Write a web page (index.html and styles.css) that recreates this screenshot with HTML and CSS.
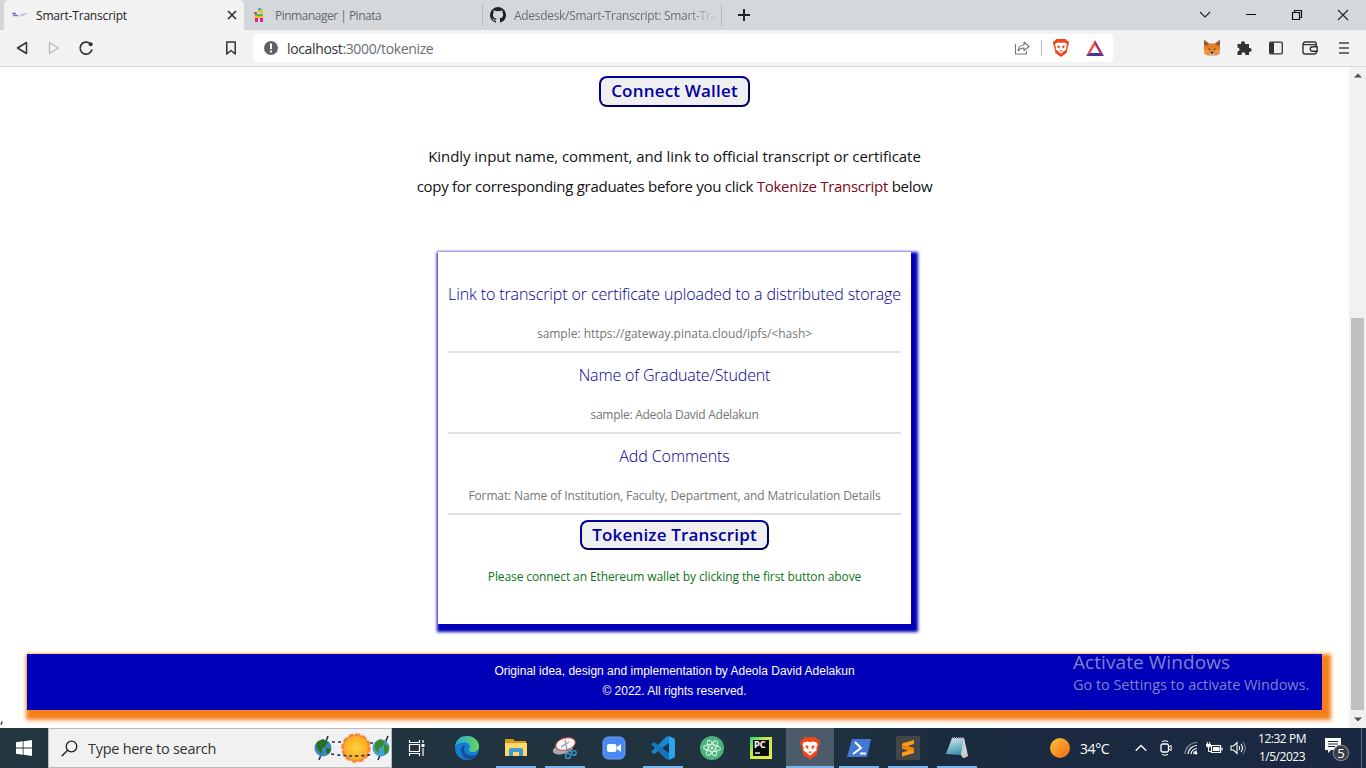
FILE: index.html
```html
<!DOCTYPE html>
<html lang="en">
<head>
<meta charset="utf-8">
<title>Smart-Transcript</title>
<link rel="stylesheet" href="styles.css">
</head>
<body>
<div class="desktop">
  <header class="tabs">
    <div class="tab active">
      <svg class="fav" width="16" height="16" viewBox="0 0 16 16"><path d="M0 6.500h4M1 8.500h5" stroke="#7777bd" stroke-width="1.600"/><path d="M7 9l4-.5 4-2.500M9 7l3 .5" stroke="#b6b6df" stroke-width="1.200" fill="none"/></svg>
      <span class="t t1">Smart-Transcript</span>
      <svg class="x" width="10" height="10" viewBox="0 0 10 10"><path d="M1 1l8 8M9 1L1 9" stroke="#333" stroke-width="1.700"/></svg>
    </div>
    <div class="tab second">
      <svg class="fav" width="14" height="16" viewBox="0 0 14 16"><path d="M6 1h3l1 3H6z" fill="#3cb7c3"/><path d="M2 5h3v2H2z" fill="#d94a66"/><path d="M7 3h4v3H7z" fill="#f2c313"/><path d="M3 7h8v2H3z" fill="#54b947"/><path d="M3 9h8v2H3z" fill="#f5b916"/><path d="M3 11h3v4H3zm5 0h3v4H8z" fill="#d2259b"/></svg>
      <span class="t t2">Pinmanager | Pinata</span>
    </div>
    <div class="tab third">
      <svg class="fav" width="16" height="16" viewBox="0 0 16 16"><path fill="#202428" d="M8 0a8 8 0 0 0-2.530 15.590c.4.070.55-.170.55-.380v-1.490c-2.230.490-2.700-.950-2.700-.950-.360-.920-.890-1.170-.890-1.170-.730-.500.050-.490.050-.490.810.060 1.230.830 1.230.830.720 1.230 1.880.870 2.340.670.070-.520.280-.870.500-1.070-1.770-.200-3.640-.890-3.640-3.950 0-.870.310-1.590.820-2.150-.080-.200-.360-1.010.080-2.110 0 0 .670-.220 2.200.820a7.600 7.600 0 0 1 4 0c1.530-1.040 2.200-.820 2.200-.820.440 1.100.160 1.910.080 2.110.510.560.820 1.280.820 2.150 0 3.070-1.870 3.750-3.650 3.950.290.250.540.730.540 1.480v2.190c0 .210.150.460.550.380A8 8 0 0 0 8 0z"/></svg>
      <span class="t t3">Adesdesk/Smart-Transcript: Smart-Tra</span>
    </div>
    <svg class="plus" width="12" height="12" viewBox="0 0 12 12"><path d="M6 0v12M0 6h12" stroke="#222" stroke-width="2"/></svg>
    <div class="wincontrols">
      <svg width="12" height="12" viewBox="0 0 12 12"><path d="M1 3l5 5 5-5" fill="none" stroke="#222" stroke-width="1.100"/></svg>
      <svg width="12" height="12" viewBox="0 0 12 12"><path d="M1 5.500h10" stroke="#111"/></svg>
      <svg width="12" height="12" viewBox="0 0 12 12"><path d="M1.500 3.500h7v7h-7zM3.500 3.500v-2h7v7h-2" fill="none" stroke="#111" stroke-width="1.200"/></svg>
      <svg width="12" height="12" viewBox="0 0 12 12"><path d="M1 1l10 10M11 1L1 11" stroke="#222" stroke-width="1.100"/></svg>
    </div>
  </header>

  <nav class="toolbar">
    <svg class="nav" width="32" height="16" viewBox="0 0 32 16"><path d="M20.500 2.500v11L11.500 8z" fill="none" stroke="#333" stroke-width="1.500" stroke-linejoin="round"/></svg>
    <svg class="nav" width="32" height="16" viewBox="0 0 32 16"><path d="M11.500 2.500v11L20.500 8z" fill="none" stroke="#bbb" stroke-width="1.400" stroke-linejoin="round"/></svg>
    <svg class="nav" width="32" height="16" viewBox="0 0 32 16"><path d="M20 3.500A6 6 0 1 0 22 9.500" fill="none" stroke="#333" stroke-width="1.700"/><circle cx="20.700" cy="4.300" r="2" fill="#333"/></svg>
    <svg class="bookmark" width="12" height="16" viewBox="0 0 12 16"><path d="M1.800 2h8.400v12L6 10.500 1.800 14z" fill="none" stroke="#333" stroke-width="1.500" stroke-linejoin="round"/></svg>
    <div class="address">
      <svg width="14" height="14" viewBox="0 0 14 14"><circle cx="7" cy="7" r="7" fill="#5f6368"/><path d="M7 2.500v5.500M7 9.500v2" stroke="#fff" stroke-width="2"/></svg>
      <span class="url t"><b>localhost</b>:3000/tokenize</span>
      <div class="addr-icons">
        <svg width="16" height="16" viewBox="0 0 16 16"><path d="M1.500 4v10h11v-3M4 11c.3-4 2.500-6 6-6V2l5 4.500-5 4V8c-2.500 0-4.500.8-6 3z" fill="none" stroke="#777" stroke-width="1.100" stroke-linejoin="round"/></svg>
        <i class="sep"></i>
        <svg width="16" height="18" viewBox="0 0 16 18"><use href="#lion"/></svg>
        <svg width="18" height="16" viewBox="0 0 18 16"><path d="M9 0L0 16l4-2.500L9 5z" fill="#f0533a"/><path d="M9 0l9 16-4-2.500L9 5z" fill="#a52a6a"/><path d="M0 16h18l-4-3H4z" fill="#4a3296"/></svg>
      </div>
    </div>
    <div class="ext">
      <svg width="18" height="16" viewBox="0 0 18 16"><path d="M1 0l5 3.500h6L17 0v9l-.5 5L13 15.500H5L1.500 14 1 9z" fill="#e88026"/><path d="M1 0l5 3.500L3 6 1 5zM17 0l-5 3.500L15 6l2-1z" fill="#8b5a32"/><path d="M2 9l5 2-1 3-4-1zM16 9l-5 2 1 3 4-1z" fill="#f6963a"/><path d="M5 8l2.500 1.500-1 .7zM13 8l-2.500 1.500 1 .7z" fill="#333"/><path d="M7 12h4l1 3H6z" fill="#c9b8a8"/><path d="M7.500 12h3l-.500 1.500H8z" fill="#222"/></svg>
      <svg class="e2" width="16" height="16" viewBox="0 0 16 16"><path d="M1.500 4h3.700a2 2 0 1 1 3.600 0H13v4a2 2 0 1 1 0 3.800V15H9.300a2 2 0 1 0-3.700 0H1.500v-3.500a2 2 0 1 0 0-4z" fill="#333"/></svg>
      <svg class="e3" width="14" height="14" viewBox="0 0 14 14"><rect x=".7" y="1.200" width="12.600" height="11.600" rx="1" fill="none" stroke="#333" stroke-width="1.300"/><path d="M1 1.500h4v11H1z" fill="#333"/></svg>
      <svg class="e4" width="16" height="14" viewBox="0 0 16 14"><path d="M14.300 4V3a2 2 0 0 0-2-2h-9A2.300 2.300 0 0 0 1 3.300V11a2 2 0 0 0 2 2h9.300a2 2 0 0 0 2-2v-1M1 3.600h11.300a2 2 0 0 1 2 2M15.200 5.700v4.500h-4.700a2.250 2.250 0 0 1 0-4.500z" fill="none" stroke="#333" stroke-width="1.400"/></svg>
      <svg class="e5" width="10" height="12" viewBox="0 0 10 12"><path d="M0 1h10M0 6h10M0 11h10" stroke="#444" stroke-width="1.500"/></svg>
    </div>
  </nav>

  <div class="viewport">
    <main class="page">
      <button class="btn connect"><span class="t">Connect Wallet</span></button>
      <p class="intro"><span class="t i1">Kindly input name, comment, and link to official transcript or certificate</span><br><span class="t i2">copy for corresponding graduates before you click <em>Tokenize Transcript</em> below</span></p>
      <section class="card">
        <div class="field"><label><span class="t l1">Link to transcript or certificate uploaded to a distributed storage</span></label><div class="input"><span class="t p1">sample: https://gateway.pinata.cloud/ipfs/&lt;hash&gt;</span></div></div>
        <div class="field"><label><span class="t l2">Name of Graduate/Student</span></label><div class="input"><span class="t p2">sample: Adeola David Adelakun</span></div></div>
        <div class="field"><label><span class="t l3">Add Comments</span></label><div class="input"><span class="t p3">Format: Name of Institution, Faculty, Department, and Matriculation Details</span></div></div>
        <button class="btn tokenize"><span class="t">Tokenize Transcript</span></button>
        <p class="status"><span class="t">Please connect an Ethereum wallet by clicking the first button above</span></p>
      </section>
      <footer class="footer"><span class="t f1">Original idea, design and implementation by Adeola David Adelakun</span><br><span class="t f2">© 2022. All rights reserved.</span></footer>
      <span class="stray">,</span>
      <div class="watermark"><div><span class="t w1">Activate Windows</span></div><div class="small"><span class="t w2">Go to Settings to activate Windows.</span></div></div>
    </main>
    <aside class="scrollbar">
      <svg width="8" height="5" viewBox="0 0 8 5"><path d="M0 4.500L4 .5l4 4z" fill="#505050"/></svg>
      <i class="thumb"></i>
      <svg width="8" height="5" viewBox="0 0 8 5"><path d="M0 .5l4 4 4-4z" fill="#505050"/></svg>
    </aside>
  </div>

  <footer class="taskbar">
    <div class="start"><svg width="16" height="16" viewBox="0 0 16 16"><path d="M0 2.300L6.700 1.300v6.200H0zM7.500 1.200L16 0v7.500H7.500zM0 8.400h6.700v6.300L0 13.800zM7.500 8.400H16V16l-8.500-1.200z" fill="#fff"/></svg></div>
    <div class="search">
      <svg width="17" height="17" viewBox="0 0 17 17"><circle cx="10.500" cy="6.500" r="5.300" fill="none" stroke="#222" stroke-width="1.300"/><path d="M6.600 10.300L.7 16.300" stroke="#222" stroke-width="1.400"/></svg>
      <span class="t s1">Type here to search</span>
      <svg class="doodle" width="78" height="32" viewBox="0 0 78 32"><defs><radialGradient id="sun"><stop offset="0" stop-color="#ffd13e"/><stop offset="1" stop-color="#fbac22"/></radialGradient></defs>
        <path d="M5 28L14 4M64 28L74 4" stroke="#253252" stroke-width="1.600"/><path d="M18 10h13M56 11h4" stroke="#293455" stroke-width="1.600" stroke-dasharray="3 3"/>
        <circle cx="9" cy="16" r="8.500" fill="#3a88bd"/><path d="M3 10l6-3 5 3-3 5-3 1v6l-4-4-2-4zM12 16l5 1-2 5-3-1z" fill="#286f22"/>
        <circle cx="67" cy="16" r="8.500" fill="#45a0cf"/><path d="M61 11l5-4 5 3-3 5-3 1v6l-4-5zM70 12l5 2-1 7-4 1z" fill="#3a8b2a"/>
        <circle cx="42" cy="16" r="13.300" fill="#f5893a" stroke="#f5893a" stroke-width="3" stroke-linecap="round" stroke-dasharray="3 3.960"/><circle cx="42" cy="16" r="12" fill="url(#sun)"/>
        <path d="M17 22q25 4 42 0" stroke="#293455" stroke-width="1.700" fill="none" stroke-dasharray="3 3"/></svg>
    </div>
    <div class="taskview"><svg width="17" height="16" viewBox="0 0 17 16"><path d="M1.500 0v2.500h10V0M1.500 16v-2.500h10V16M1.500 4.500h10v7h-10zM15 0v3M15 8v8" fill="none" stroke="#fff" stroke-width="1.200"/><path d="M13.500 4h3v3h-3z" fill="#fff"/></svg></div>
    <div class="apps">
      <div class="app"><svg width="24" height="24" viewBox="0 0 24 24"><defs><linearGradient id="eg"><stop offset="0" stop-color="#2aa8dc"/><stop offset="1" stop-color="#65d65a"/></linearGradient></defs><circle cx="12" cy="12" r="12" fill="#167cd0"/><path d="M0 11C1 3 6 0 12 0c7 0 12 5 12 10 0 4-3 6-6 6-4 0-5-2-3.500-4 1-3-1-5.500-5-5.500C5 6.500 1 8 0 11z" fill="url(#eg)"/><path d="M9 9c-3 2-4 5-2 9 2 5 7 6 11 5 2-1 4-3 4.500-5-4 2-9 2-12-1-2-3-2-6-.5-8z" fill="#12509b"/></svg></div>
      <div class="app open"><svg width="22" height="20" viewBox="0 0 22 20"><path d="M0 1h8l2 2h11v5H0z" fill="#d89a21"/><path d="M0 5h22v13H0z" fill="#ffd76b"/><path d="M4 18v-6q0-2 2-2h10q2 0 2 2v6h-4v-4H8v4z" fill="#409ad2"/></svg></div>
      <div class="app open"><svg width="24" height="24" viewBox="0 0 24 24"><ellipse cx="10" cy="13" rx="10.500" ry="5" transform="rotate(-15 10 13)" fill="#a9a9ac"/><ellipse cx="12.500" cy="8" rx="10" ry="6" transform="rotate(-15 12.500 8)" fill="#f7f7f7" stroke="#d54145"/><path d="M12 4l2 10M8 11l8-5" stroke="#999" stroke-width="1.200"/><circle cx="15" cy="20" r="2.500" fill="none" stroke="#3c91bd" stroke-width="1.500"/><circle cx="21" cy="17" r="2.200" fill="none" stroke="#3c91bd" stroke-width="1.500"/><path d="M15 17.500V13M19 16l-5-2" fill="none" stroke="#3c91bd" stroke-width="1.500"/></svg></div>
      <div class="app"><svg width="24" height="24" viewBox="0 0 24 24"><rect x="1" y="1" width="22" height="22" rx="5.500" fill="#4a87f2" stroke="#719ff3"/><rect x="5" y="8" width="9.500" height="8" rx="2" fill="#fff"/><path d="M15 11l4-3v8l-4-3z" fill="#fff"/></svg></div>
      <div class="app open"><svg width="24" height="24" viewBox="0 0 24 24"><path d="M18 0v7L3 18l-3-2 15-15z" fill="#1688d1"/><path d="M0 8l3-2 15 11v7l-3-1z" fill="#1475b8"/><path d="M18 0l6 3v18l-6 3z" fill="#27a5ee"/></svg></div>
      <div class="app"><svg width="24" height="24" viewBox="0 0 24 24"><circle cx="12" cy="12" r="12" fill="#4bb27b"/><g fill="none" stroke="#d9f7e6" stroke-width="1"><ellipse cx="12" cy="12" rx="3.300" ry="8.500" transform="rotate(-25 12 12)"/><ellipse cx="12" cy="12" rx="3.300" ry="8.500" transform="rotate(35 12 12)"/><ellipse cx="12" cy="12" rx="3.300" ry="8.500" transform="rotate(95 12 12)"/></g><circle cx="12" cy="12" r="1.300" fill="#fff"/></svg></div>
      <div class="app"><svg width="22" height="22" viewBox="0 0 22 22"><defs><linearGradient id="pg" x2="1" y2="1"><stop offset="0" stop-color="#27d584"/><stop offset=".35" stop-color="#b9eb42"/><stop offset="1" stop-color="#f5ee43"/></linearGradient></defs><path d="M0 0h22v22H0z" fill="url(#pg)"/><path d="M3 3h16v16H3z" fill="#0b0b0b"/><text class="pc" x="4" y="11">PC</text><path d="M5 16h5" stroke="#fff" stroke-width="1.300"/></svg></div>
      <div class="app open current"><svg width="20" height="23" viewBox="0 0 16 18"><g id="lion"><path d="M3.500 0h9L14 1.700l1.500.3.500 3-1 2-1.500 7L8 18l-5.500-4L1 7 0 5l.5-3L2 1.700z" fill="#f0461c"/><path d="M3 4l3-.6L8 4l2-.6 3 .6 1 1.800-1 3.200.3 1.500L11 12l-3 2.800L5 12l-2.300-1.500L3 9 2 5.800z" fill="#fff"/><path d="M4.500 6.300l2.500.6-.5.900.5 2-2.500-1.600zM11.500 6.300L9 6.900l.5.900-.5 2 2.500-1.600zM6.500 11.700l1.500-.6 1.500.6L8 12.800z" fill="#f0461c"/></g></svg></div>
      <div class="app open"><svg width="24" height="20" viewBox="0 0 24 20"><path d="M5 1h19l-4 18H0z" fill="#4278d1"/><path d="M8 4l6 6-8 6M13 15.500h6" fill="none" stroke="#fff" stroke-width="2"/></svg></div>
      <div class="app open"><svg width="24" height="24" viewBox="0 0 24 24"><rect width="24" height="24" rx="1" fill="#444548"/><path d="M18 4v4l-6.500 2 6.500 2v5L6 20.500v-4l6.500-2-6.500-2v-5z" fill="#ff9d19"/><path d="M6 8.500l12 4v3l-12-4z" fill="#ed8500"/></svg></div>
      <div class="app open"><svg width="24" height="24" viewBox="0 0 24 24"><defs><linearGradient id="ng" x2=".3" y2="1"><stop offset="0" stop-color="#d8eef1"/><stop offset="1" stop-color="#4297ad"/></linearGradient></defs><path d="M7 2h12l4 18-4 2z" fill="#e2e2dc"/><path d="M7 2h12l-3 17-15-1z" fill="url(#ng)"/><path d="M16 19l3-16 3 17-4 2z" fill="#c9cfd0"/><path d="M7 2h12" stroke="#999" stroke-dasharray="1 1" stroke-width="2"/></svg></div>
    </div>
    <div class="tray">
      <svg class="sun" width="20" height="20" viewBox="0 0 20 20"><defs><linearGradient id="wg" x2="1" y2="1"><stop offset="0" stop-color="#ffc13a"/><stop offset="1" stop-color="#f06911"/></linearGradient></defs><circle cx="10" cy="10" r="10" fill="url(#wg)"/></svg>
      <span class="t temp">34°C</span>
      <svg class="up" width="12" height="8" viewBox="0 0 12 8"><path d="M.7 6.800L6 1.500l5.300 5.300" fill="none" stroke="#fff" stroke-width="1.300"/></svg>
      <svg class="cam" width="12" height="16" viewBox="0 0 12 16"><rect x="1" y="4" width="7.500" height="8" rx="1.500" fill="none" stroke="#fff" stroke-width="1.300"/><path d="M8.500 7l2.700-1.500v5L8.500 9M2 1.500q3-1.500 6 0M2 14.500q3 1.500 6 0" fill="none" stroke="#fff"/></svg>
      <svg class="wifi" width="14" height="14" viewBox="0 0 14 14"><path d="M1 13A12 12 0 0 1 13 1.500" fill="none" stroke="#8e98a5" stroke-width="1.200"/><path d="M4 13a9 9 0 0 1 9-8.500M7 13a6 6 0 0 1 6-5.500M9.700 13a3.300 3.300 0 0 1 3.300-3" fill="none" stroke="#fff" stroke-width="1.200"/><circle cx="12" cy="12.300" r="1.300" fill="#fff"/></svg>
      <svg class="bat" width="17" height="14" viewBox="0 0 17 14"><path d="M5.500 4.500h9v7h-9zM16 6.500v3" fill="none" stroke="#fff" stroke-width="1.200"/><path d="M7 6h6.500v4H7zM0 3h5v2.500H4L3 7H2L1 5.500H0z" fill="#fff"/><path d="M1.300 1v2M3.700 1v2M2.500 7v3.500h3" fill="none" stroke="#fff"/></svg>
      <svg class="vol" width="16" height="14" viewBox="0 0 16 14"><path d="M1 5h2.500L7 1.500v11L3.500 9H1z" fill="none" stroke="#fff" stroke-width="1.100"/><path d="M9 5q1.500 2 0 4M11 3q3 4 0 8" fill="none" stroke="#fff" stroke-width="1.100"/><path d="M13 1q4.500 6 0 12" fill="none" stroke="#818c9a"/></svg>
      <div class="clock"><span class="t c1">12:32 PM</span><span class="t c2">1/5/2023</span></div>
      <svg class="note" width="25" height="24" viewBox="0 0 25 24"><path d="M0 0h16v12H6l-3 3v-3H0z" fill="#fff"/><path d="M3 3.500h10M3 6h10M3 8.500h7" stroke="#1c2a40"/><circle cx="16" cy="15" r="7.700" fill="#393e47" stroke="#858a90" stroke-width="1.100"/><text class="badge" x="16" y="19.500">5</text></svg>
      <i class="peek"></i>
    </div>
  </footer>
</div>
</body>
</html>
```
FILE: styles.css
```css
* { box-sizing: border-box; }
body { margin: 0; font-family: "Open Sans", sans-serif; }
svg { display: block; flex: none; }
.t { white-space: nowrap; }
.desktop { width: 1366px; height: 768px; display: flex; flex-direction: column; overflow: hidden; background: #fff; }

/* Tab strip */
.tabs { height: 30px; flex: none; display: flex; align-items: center; background: #d4d8db; font-size: 12px; color: #666a6e; }
.tab { height: 30px; display: flex; align-items: center; flex: none; }
.tab.active { width: 240px; margin-left: 4px; padding: 0 7px 0 8px; background: #f2f2f2; color: #222; border-radius: 5px 5px 0 0; }
.tab.active .fav { margin-right: 8px; }
.tab.active .x { margin-left: auto; }
.tab.second { width: 239px; padding-left: 8px; border-right: 1px solid #b8bcc0; height: 22px; }
.tab.second .fav { margin-right: 9px; }
.tab.third { width: 239px; padding-left: 7px; border-right: 1px solid #b8bcc0; height: 22px; }
.tab.third .fav { margin-right: 8px; }
.t1 { letter-spacing: -0.19px; }
.t2 { letter-spacing: -0.5px; }
.t3 { letter-spacing: -0.3px; background: linear-gradient(90deg, #666a6e 85%, #d4d8db 100%); -webkit-background-clip: text; color: transparent; }
.plus { margin-left: 16px; }
.wincontrols { margin-left: auto; display: flex; gap: 34px; padding-right: 17px; }

/* Toolbar */
.toolbar { height: 37px; flex: none; display: flex; align-items: center; background: #f2f2f2; border-bottom: 1px solid #d5d7da; padding-left: 6px; }
.bookmark { margin-left: 123px; }
.address { width: 860px; height: 28px; margin-left: 16px; background: #fff; border-radius: 3px; display: flex; align-items: center; padding: 0 9px 0 11px; }
.url { margin-left: 9px; font-size: 14px; letter-spacing: -0.36px; color: #6b6f73; }
.url b { font-weight: 400; color: #333; }
.addr-icons { margin-left: auto; display: flex; align-items: center; gap: 11px; }
.addr-icons svg:last-child { margin-left: 6px; }
.sep { width: 1px; height: 16px; background: #bbb; }
.ext { margin-left: auto; display: flex; align-items: center; padding-right: 17px; }
.e2 { margin-left: 15px; }
.e3 { margin-left: 17px; }
.e4 { margin-left: 19px; }
.e5 { margin-left: 21px; }

/* Page */
.viewport { height: 661px; flex: none; display: flex; }
.page { position: relative; width: 1349px; display: flex; flex-direction: column; align-items: center; padding-top: 9px; font-family: "Open Sans", sans-serif; }
.btn { display: flex; align-items: center; justify-content: center; padding: 0 0 2px; border: 2px solid; border-color: #00009c #00005c #00005c #00009c; border-radius: 8px; background: #efefef; color: #0000a4; font: 600 17px "Open Sans", sans-serif; letter-spacing: 0.19px; }
.connect { width: 151px; height: 31px; }
.intro { margin: 34px 0 0; text-align: center; font-size: 15px; line-height: 30px; color: #111; }
.intro em { font-style: normal; color: #7d0a16; }
.i1 { letter-spacing: -0.054px; }
.i2 { letter-spacing: -0.28px; }
.card { width: 473px; height: 372px; margin-top: 51px; padding: 20px 10px 0; background: #fff; box-shadow: 3px 4px 3px 4px #0000b8; text-align: center; display: flex; flex-direction: column; align-items: center; }
.field { width: 453px; height: 81px; }
.field label { display: block; height: 44px; line-height: 44px; font-size: 16px; font-weight: 300; color: #000090; }
.l1 { letter-spacing: -0.108px; }
.l2 { letter-spacing: -0.16px; }
.l3 { letter-spacing: -0.08px; }
.input { height: 37px; line-height: 35px; border-bottom: 2px solid #e2e2e2; font-size: 12px; color: #757575; }
.p1 { letter-spacing: -0.02px; }
.p2 { letter-spacing: -0.27px; }
.p3 { letter-spacing: -0.12px; }
.tokenize { width: 189px; height: 30px; margin-top: 5px; }
.status { margin: 16px 0 0; line-height: 22px; font-size: 12px; letter-spacing: -0.1px; color: #0f7420; }
.footer { width: 1295px; height: 56px; margin-top: 30px; padding-top: 7px; background: #0000b9; box-shadow: 4px 5px 4px 5px #f5801c; color: #fff; text-align: center; font: 12px/20px "Liberation Sans", sans-serif; }
.stray { align-self: flex-start; font: 14px/16px "Open Sans", sans-serif; }
.watermark { position: absolute; left: 1073px; top: 582px; font-size: 19px; line-height: 26px; letter-spacing: 0.07px; color: #7f80c8; }
.watermark .small { font-size: 14.5px; line-height: 20px; letter-spacing: -0.04px; }
.scrollbar { width: 17px; background: #f1f1f1; display: flex; flex-direction: column; align-items: center; padding: 6px 0; }
.thumb { width: 13px; height: 392px; margin: 240px 0 auto; background: #c1c1c1; }

/* Taskbar */
.taskbar { height: 40px; flex: none; display: flex; background: linear-gradient(90deg, #21363e, #20323f 55%, #1b2a40 75%, #1a2941); color: #fff; }
.start { width: 48px; display: flex; align-items: center; justify-content: center; }
.search { width: 344px; display: flex; align-items: center; padding: 0 0 0 12px; background: #f1f1f1; border: 1px solid #b9bcbd; color: #333; font-size: 14.5px; }
.s1 { margin-left: 10px; letter-spacing: -0.28px; }
.doodle { margin: 0 -1px 0 auto; }
.taskview { width: 51px; padding-right: 3px; display: flex; align-items: center; justify-content: center; }
.apps { display: flex; gap: 1px; }
.app { width: 48px; height: 40px; display: flex; align-items: center; justify-content: center; }
.open { background: linear-gradient(#78b6ed, #78b6ed) 50% 100% / 40px 2px no-repeat; }
.current { background: linear-gradient(#78b6ed, #78b6ed) 50% 100% / 48px 2px no-repeat #4c5b69; }
.pc { font: 700 8px "DejaVu Sans", sans-serif; fill: #fff; }
.tray { margin-left: auto; display: flex; align-items: center; font-size: 14px; }
.temp { width: 29px; margin-left: 10px; letter-spacing: -0.4px; }
.up { margin-left: 26px; }
.cam { margin-left: 13px; }
.wifi { margin-left: 12px; }
.bat { margin-left: 8px; }
.vol { margin-left: 7px; }
.clock { width: 60px; margin-left: 6px; display: flex; flex-direction: column; align-items: center; font-size: 12px; line-height: 18px; letter-spacing: -0.47px; }
.note { margin: 4px 0 0 13px; }
.badge { font: 13px "Open Sans", sans-serif; fill: #fff; text-anchor: middle; }
.peek { width: 1px; height: 40px; margin: 0 4px 0 11px; background: #5e6b7a; }
```
